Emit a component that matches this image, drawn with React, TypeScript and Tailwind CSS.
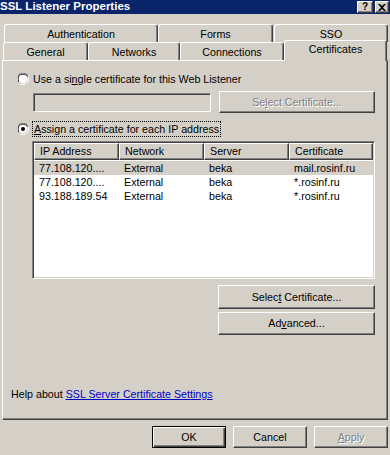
import React from "react";

const raised =
  "border border-t-white border-l-white border-r-[#404040] border-b-[#404040] shadow-[inset_-1px_-1px_0_#808080] bg-[#d4d0c8]";
const sunken =
  "border border-t-[#808080] border-l-[#808080] border-r-white border-b-white shadow-[inset_1px_1px_0_#404040,inset_-1px_-1px_0_#d4d0c8]";
const disabledText = "text-[#808080] [text-shadow:1px_1px_0_#fff]";

const Radio = ({ checked }: { checked?: boolean }) => (
  <svg width="12" height="12" viewBox="0 0 12 12" className="shrink-0">
    <path d="M4 0h4l2 1 1 2v1h-1v-1l-1-1-2-1h-2l-2 1-1 1v2h-1v-2l1-2z" fill="#808080" />
    <path d="M4 1h4l1 1h-6zM2 2h1v1h-1zM9 2h1v1h-1zM1 3h1v6h-1z" fill="#404040" />
    <circle cx="6" cy="6" r="4.3" fill="#fff" />
    <path d="M11 4h1v4l-1 2-2 1-1 1h-4l-2-1h2l2 0h2l2-1 1-2z" fill="#fff" />
    {checked && <circle cx="6" cy="6" r="2" fill="#000" />}
  </svg>
);

const Tab = ({ label, w, active }: { label: string; w: string; active?: boolean }) => (
  <div
    className={`${w} ${
      active ? "h-[21px] -mb-[1px] relative z-10 pb-[3px]" : "h-[18px] pt-[1px]"
    } flex items-center justify-center rounded-t-[3px] border-t border-l border-r border-t-white border-l-white border-r-[#404040] shadow-[inset_-1px_0_0_#808080] bg-[#d4d0c8]`}
  >
    {label}
  </div>
);

const Btn = ({
  children,
  className = "",
  disabled,
  def,
}: {
  children: React.ReactNode;
  className?: string;
  disabled?: boolean;
  def?: boolean;
}) => (
  <div
    className={`${className} flex items-center justify-center ${
      def
        ? "border border-black bg-[#d4d0c8] shadow-[inset_1px_1px_0_#fff,inset_-1px_-1px_0_#404040,inset_-2px_-2px_0_#808080]"
        : raised
    } ${disabled ? disabledText : ""}`}
  >
    {children}
  </div>
);

const cols = ["w-[85px]", "w-[85px]", "w-[85px]", "w-[84px]"];
const header = ["IP Address", "Network", "Server", "Certificate"];
const rows = [
  ["77.108.120....", "External", "beka", "mail.rosinf.ru"],
  ["77.108.120....", "External", "beka", "*.rosinf.ru"],
  ["93.188.189.54", "External", "beka", "*.rosinf.ru"],
];

export default function App() {
  return (
    <div className="w-[390px] h-[455px] overflow-hidden bg-[#d4d0c8] text-[10.7px] text-black font-['Liberation_Sans',Arial,sans-serif] leading-none">
      {/* title bar */}
      <div className="h-[14px] bg-[#0a246a] flex items-start justify-between">
        <span className="mt-[1px] text-white font-bold text-[11.5px] whitespace-nowrap">
          SSL Listener Properties
        </span>
        <div className="flex gap-[2px] pt-[1px] pr-[1px]">
          <div className={`${raised} w-[16px] h-[12px] flex items-center justify-center font-bold text-[10px]`}>?</div>
          <div className={`${raised} w-[14px] h-[12px] flex items-center justify-center`}>
            <svg width="8" height="7" viewBox="0 0 8 7">
              <path d="M0 0h2l2 2 2-2h2l-3 3.5 3 3.5h-2l-2-2-2 2h-2l3-3.5z" fill="#000" />
            </svg>
          </div>
        </div>
      </div>

      {/* tabs */}
      <div className="mt-[10px] h-[18px] flex pl-[4px]">
        <Tab label="Authentication" w="w-[154px]" />
        <Tab label="Forms" w="w-[115px]" />
        <Tab label="SSO" w="w-[114px] ml-[1px]" />
      </div>
      <div className="h-[18px] flex items-end pl-[3px]">
        <Tab label="General" w="w-[85px]" />
        <Tab label="Networks" w="w-[92px]" />
        <Tab label="Connections" w="w-[104px]" />
        <Tab label="Certificates" w="w-[103px]" active />
      </div>

      {/* panel */}
      <div className={`${raised} mx-[2px] w-[386px] h-[360px] pl-[14px] flex flex-col`}>
        <div className="mt-[10px] h-[16px] flex items-center gap-[4px]">
          <Radio />
          <span>
            Use a si<u>n</u>gle certificate for this Web Listener
          </span>
        </div>
        <div className="mt-[4px] h-[22px] flex items-center ml-[16px]">
          <div className={`${sunken} w-[178px] h-[19px]`} />
          <Btn className="ml-[8px] w-[156px] h-[22px]" disabled>
            <span>
              Se<u>l</u>ect Certificate...
            </span>
          </Btn>
        </div>
        <div className="mt-[8px] h-[16px] flex items-center gap-[3px]">
          <Radio checked />
          <span className="h-[16px] px-[1px] flex items-center border border-dotted border-black">
            <span>
              <u>A</u>ssign a certificate for each IP address
            </span>
          </span>
        </div>

        {/* list */}
        <div className={`${sunken} mt-[4px] ml-[15px] w-[343px] h-[138px] bg-white p-[1px]`}>
          <div className="flex h-[17px]">
            {header.map((h, i) => (
              <div key={h} className={`${cols[i]} ${raised} flex items-center pl-[5px]`}>
                {h}
              </div>
            ))}
          </div>
          <div className="mt-[1px]">
            {rows.map((r, ri) => (
              <div key={ri} className={`flex h-[14px] items-center ${ri === 0 ? "bg-[#d4d0c8]" : ""}`}>
                {r.map((c, ci) => (
                  <div key={ci} className={`${cols[ci]} pl-[5px] whitespace-nowrap`}>
                    {c}
                  </div>
                ))}
              </div>
            ))}
          </div>
        </div>

        <Btn className="mt-[6px] ml-[201px] w-[157px] h-[24px]">
          <span>
            Selec<u>t</u> Certificate...
          </span>
        </Btn>
        <Btn className="mt-[3px] ml-[201px] w-[157px] h-[23px]">
          <span>
            Ad<u>v</u>anced...
          </span>
        </Btn>

        <div className="mt-[52px] -ml-[6px] h-[14px] flex items-center">
          <span>Help about&nbsp;</span>
          <span className="text-[#0000c8] underline">SSL Server Certificate Settings</span>
        </div>
      </div>

      {/* dialog buttons */}
      <div className="mt-[6px] flex pl-[152px] gap-[7px]">
        <Btn def className="w-[74px] h-[22px]">OK</Btn>
        <Btn className="w-[74px] h-[22px]">Cancel</Btn>
        <Btn disabled className="w-[74px] h-[22px]">
          <span>
            <u>A</u>pply
          </span>
        </Btn>
      </div>
    </div>
  );
}
